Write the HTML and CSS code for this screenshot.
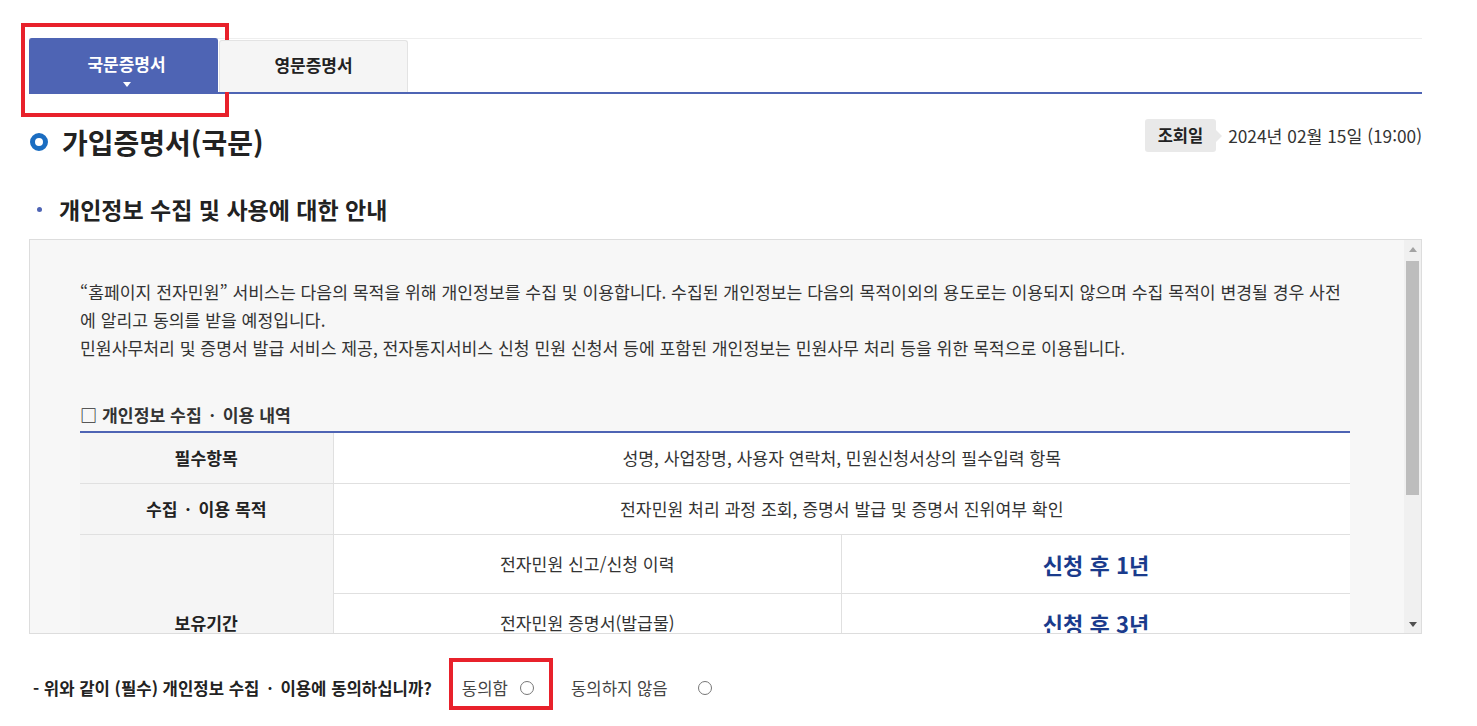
FILE: index.html
```html
<!DOCTYPE html>
<html lang="ko">

<head>
    <meta charset="utf-8">
    <title>가입증명서(국문)</title>
    <link rel="stylesheet" href="styles.css">
</head>

<body>
    <div class="wrap">
        <div class="tabs">
            <a class="tab active">국문증명서<span class="mark"></span></a>
            <a class="tab">영문증명서</a>
        </div>

        <div class="page-head">
            <h1 class="title"><span class="ring"></span>가입증명서(국문)</h1>
            <div class="date">
                <span class="date-label">조회일</span>
                <span class="date-value">2024년 02월 15일 (19:00)</span>
            </div>
        </div>

        <h2 class="sub-title">개인정보 수집 및 사용에 대한 안내</h2>

        <div class="agree-box">
            <div class="agree-inner">
                <p class="desc">“홈페이지 전자민원” 서비스는 다음의 목적을 위해 개인정보를 수집 및 이용합니다. 수집된 개인정보는 다음의 목적이외의 용도로는 이용되지 않으며 수집 목적이 변경될 경우 사전에 알리고 동의를 받을 예정입니다.<br>
                민원사무처리 및 증명서 발급 서비스 제공, 전자통지서비스 신청 민원 신청서 등에 포함된 개인정보는 민원사무 처리 등을 위한 목적으로 이용됩니다.</p>

                <h3 class="tbl-title">□ 개인정보 수집<span class="dot">ㆍ</span>이용 내역</h3>
                <table class="tbl">
                    <colgroup>
                        <col class="col-th">
                        <col>
                        <col>
                    </colgroup>
                    <tr>
                        <th>필수항목</th>
                        <td colspan="2">성명, 사업장명, 사용자 연락처, 민원신청서상의 필수입력 항목</td>
                    </tr>
                    <tr>
                        <th>수집<span class="dot">ㆍ</span>이용 목적</th>
                        <td colspan="2">전자민원 처리 과정 조회, 증명서 발급 및 증명서 진위여부 확인</td>
                    </tr>
                    <tr class="tall">
                        <th rowspan="3">보유기간</th>
                        <td>전자민원 신고/신청 이력</td>
                        <td class="period">신청 후 1년</td>
                    </tr>
                    <tr class="tall">
                        <td>전자민원 증명서(발급물)</td>
                        <td class="period">신청 후 3년</td>
                    </tr>
                    <tr class="tall">
                        <td>전자민원 처리 결과</td>
                        <td class="period">신청 후 5년</td>
                    </tr>
                </table>

                <p class="note">※ 위의 개인정보 수집·이용에 대한 동의를 거부할 권리가 있습니다.<br>
                그러나 동의를 거부할 경우 전자민원 서비스 이용이 제한될 수 있습니다.</p>
            </div>
            <div class="scrollbar">
                <span class="sb-btn up"></span>
                <span class="sb-track"><span class="sb-thumb"></span></span>
                <span class="sb-btn down"></span>
            </div>
        </div>

        <div class="agree-ask">
            <strong class="ask-text">- 위와 같이 (필수) 개인정보 수집<span class="dot">ㆍ</span>이용에 동의하십니까?</strong>
            <label class="opt">동의함<input type="radio" name="agree"><span class="mark"></span></label>
            <label class="opt">동의하지 않음<input type="radio" name="agree"></label>
        </div>
    </div>
</body>

</html>
```

FILE: styles.css
```css
:root {
    --main-blue: #4e64b4;
    --dark-blue: #1a3b8c;
    --ring-blue: #1b6dc1;
    --text-color: #333;
    --border-color: #e0e0e0;
    --box-bg: #f7f7f7;
    --mark-red: #e8212b;
    --bar-track: #f0f0f0;
    --bar-thumb: #bdbdbd;
}

* {
    box-sizing: border-box;
}

body {
    margin: 0;
    font-family: "Noto Sans CJK KR", "Noto Sans", sans-serif;
    color: var(--text-color);
    background: #fff;
}

.wrap {
    padding: 38px 55px 27px 29px;
}

.dot {
    display: inline-block;
    width: 21px;
    text-align: center;
}

/* tabs */
.tabs {
    display: flex;
    align-items: flex-end;
    border-top: 1px solid #eee;
    border-bottom: 2px solid var(--main-blue);
}

.tab {
    position: relative;
    display: block;
    width: 189px;
    height: 52px;
    padding-top: 12px;
    margin-left: 1px;
    text-align: center;
    font-size: 17px;
    font-weight: 700;
    line-height: 24px;
    color: #222;
    background: #f5f5f5;
    border: 1px solid #e3e3e3;
    border-bottom: none;
    border-radius: 3px 3px 0 0;
}

.tab.active {
    height: 54px;
    margin: -1px 0 0;
    padding: 13px 0 0 6px;
    color: #fff;
    background: var(--main-blue);
    border-color: var(--main-blue);
}

.tab.active::after {
    content: "";
    display: block;
    width: 0;
    height: 0;
    margin: 6px auto 0;
    border-left: 4px solid transparent;
    border-right: 4px solid transparent;
    border-top: 5px solid #fff;
}

.mark {
    position: absolute;
    border: 4px solid var(--mark-red);
    pointer-events: none;
}

.tab .mark {
    left: -9px;
    top: -16px;
    width: 208px;
    height: 94px;
}

/* title */
.page-head {
    display: flex;
    justify-content: space-between;
    align-items: flex-start;
    margin-top: 25px;
}

.title {
    display: flex;
    align-items: center;
    margin: 0;
    padding-top: 5px;
    font-size: 28px;
    font-weight: 700;
    line-height: 36px;
    color: #222;
}

.ring {
    width: 18px;
    height: 18px;
    margin: 0 14px 0 1px;
    border: 5px solid var(--ring-blue);
    border-radius: 50%;
}

.date {
    display: flex;
    align-items: center;
}

.date-label {
    position: relative;
    height: 33px;
    padding: 0 13px;
    font-size: 16.5px;
    font-weight: 700;
    line-height: 33px;
    color: #222;
    background: #e9e9e9;
    border-radius: 3px;
}

.date-label::after {
    content: "";
    position: absolute;
    top: 11px;
    right: -6px;
    border-left: 6px solid #e9e9e9;
    border-top: 6px solid transparent;
    border-bottom: 6px solid transparent;
}

.date-value {
    margin-left: 12px;
    font-size: 17.3px;
    color: #333;
}

.sub-title {
    display: flex;
    align-items: center;
    margin: 35px 0 16px;
    font-size: 23px;
    font-weight: 700;
    line-height: 28px;
    color: #222;
}

.sub-title::before {
    content: "";
    width: 5px;
    height: 5px;
    margin: 0 17px 0 8px;
    border-radius: 50%;
    background: var(--main-blue);
}

/* scroll box */
.agree-box {
    display: flex;
    height: 395px;
    overflow: hidden;
    background: var(--box-bg);
    border: 1px solid #ddd;
}

.agree-inner {
    flex: 1;
    min-width: 0;
    padding: 38px 54px 48px 50px;
}

.scrollbar {
    display: flex;
    flex-direction: column;
    width: 17px;
    background: var(--bar-track);
}

.sb-btn {
    display: flex;
    align-items: center;
    justify-content: center;
    height: 18px;
}

.sb-btn::before {
    content: "";
    border-left: 4.5px solid transparent;
    border-right: 4.5px solid transparent;
}

.sb-btn.up::before {
    border-bottom: 5px solid #a3a3a3;
}

.sb-btn.down::before {
    border-top: 5px solid #505050;
}

.sb-track {
    flex: 1;
    padding: 3px 2px 0;
}

.sb-thumb {
    display: block;
    height: 234px;
    background: var(--bar-thumb);
}

.desc {
    margin: 0;
    font-size: 17.2px;
    line-height: 28px;
}

.tbl-title {
    margin: 41px 0 4px;
    font-size: 17.2px;
    font-weight: 700;
    line-height: 24px;
}

.tbl {
    width: 100%;
    table-layout: fixed;
    border-collapse: collapse;
    border-top: 2px solid var(--main-blue);
    font-size: 17.2px;
}

.col-th {
    width: 253px;
}

.tbl th,
.tbl td {
    height: 51px;
    padding: 0 10px;
    text-align: center;
    border-bottom: 1px solid var(--border-color);
}

.tbl th {
    font-weight: 700;
    color: #222;
    background: #f5f5f5;
}

.tbl td {
    background: #fff;
    border-left: 1px solid var(--border-color);
}

.tbl .tall td {
    height: 59px;
}

.tbl .period {
    font-size: 22px;
    font-weight: 700;
    color: var(--dark-blue);
}

.note {
    margin: 20px 0 0;
    font-size: 16px;
    line-height: 26px;
    color: #666;
}

/* agree question */
.agree-ask {
    display: flex;
    align-items: center;
    margin-top: 42px;
    padding-left: 4px;
    font-size: 16.7px;
    line-height: 24px;
}

.ask-text {
    color: #222;
}

.opt {
    position: relative;
    display: flex;
    align-items: center;
    margin-left: 30px;
    color: #444;
}

.opt + .opt {
    margin-left: 37px;
}

.opt input {
    appearance: none;
    width: 14px;
    height: 14px;
    margin: 0 0 0 12px;
    border: 1px solid #777;
    border-radius: 50%;
    background: #fff;
}

.opt + .opt input {
    margin-left: 30px;
}

.opt .mark {
    left: -13px;
    top: -18px;
    width: 104px;
    height: 52px;
}
```
